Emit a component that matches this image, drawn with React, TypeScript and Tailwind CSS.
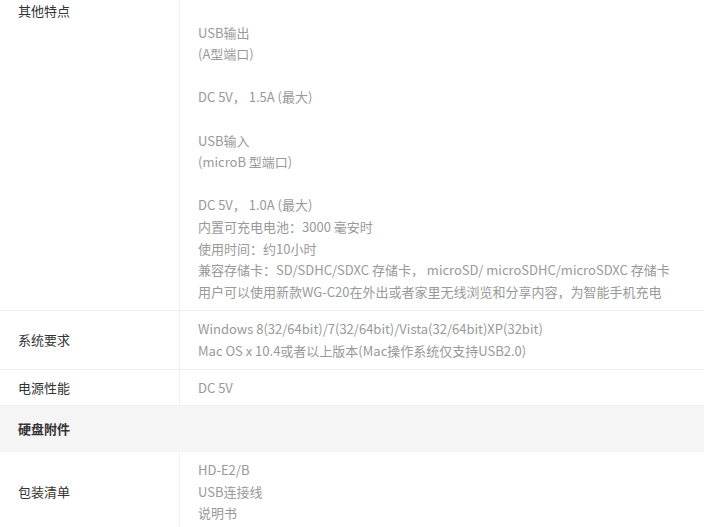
const font = { fontFamily: '"Microsoft YaHei", "Noto Sans CJK SC", sans-serif' };

const features = [
  '',
  'USB输出',
  '(A型端口)',
  '',
  'DC 5V， 1.5A (最大)',
  '',
  'USB输入',
  '(microB 型端口)',
  '',
  'DC 5V， 1.0A (最大)',
  '内置可充电电池：3000 毫安时',
  '使用时间：约10小时',
  '兼容存储卡：SD/SDHC/SDXC 存储卡， microSD/ microSDHC/microSDXC 存储卡',
  '用户可以使用新款WG-C20在外出或者家里无线浏览和分享内容，为智能手机充电',
];

function Lines({ items }: { items: string[] }) {
  return (
    <>
      {items.map((t, i) => (
        <p key={i} className="h-[21.6px] whitespace-nowrap">
          {t}
        </p>
      ))}
    </>
  );
}

function Row({ label, items, className = '' }: { label: string; items: string[]; className?: string }) {
  return (
    <div className="flex border-b border-[#f0f0f0]">
      <div className="w-[180px] shrink-0 border-r border-[#f0f0f0] pl-[18px] flex items-center text-[#333]">
        {label}
      </div>
      <div className={`flex-1 pl-[18px] text-[#999] ${className}`}>
        <Lines items={items} />
      </div>
    </div>
  );
}

export default function App() {
  return (
    <div className="w-[704px] h-[527px] overflow-hidden bg-white text-[13px] leading-[21.6px]" style={font}>
      {/* 其他特点 */}
      <div className="flex border-b border-[#f0f0f0]">
        <div className="w-[180px] shrink-0 border-r border-[#f0f0f0] pl-[18px] text-[#333]">其他特点</div>
        <div className="flex-1 pl-[18px] pb-[8px] text-[#999]">
          <Lines items={features} />
        </div>
      </div>

      <Row
        label="系统要求"
        className="py-[7px]"
        items={[
          'Windows 8(32/64bit)/7(32/64bit)/Vista(32/64bit)XP(32bit)',
          'Mac OS x 10.4或者以上版本(Mac操作系统仅支持USB2.0)',
        ]}
      />
      <Row label="电源性能" className="py-[7px]" items={['DC 5V']} />

      {/* 硬盘附件 */}
      <div className="h-[46px] bg-[#f5f5f5] pl-[18px] flex items-center font-bold text-[#333]">硬盘附件</div>

      <Row label="包装清单" className="py-[7px]" items={['HD-E2/B', 'USB连接线', '说明书']} />
    </div>
  );
}
